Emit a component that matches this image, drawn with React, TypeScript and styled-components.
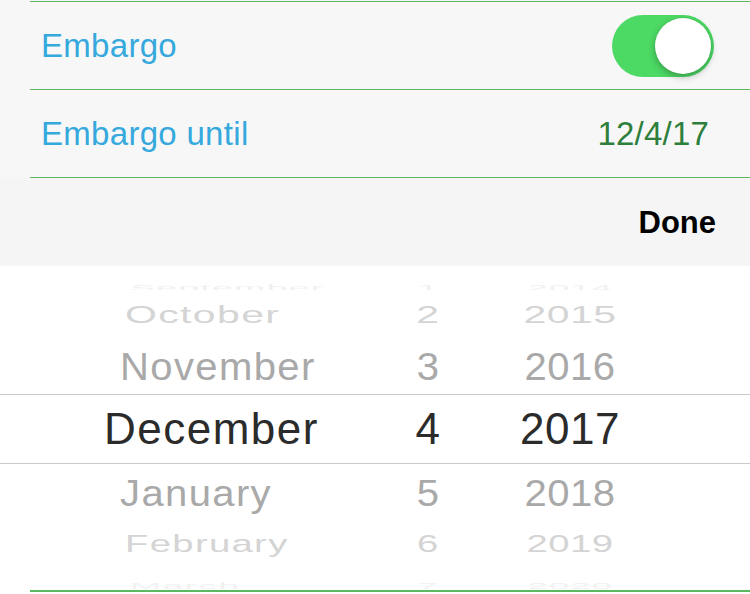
import React from "react";
import styled, { createGlobalStyle } from "styled-components";

const GlobalStyle = createGlobalStyle`
    html, body {
        margin: 0;
        padding: 0;
        background: #ffffff;
        font-family: "Liberation Sans", Arial, sans-serif;
    }
`;

type WheelRow = {
    month: string;
    day: string;
    year: string;
    height: number;
    indent: number;
    sx: number;
    sy: number;
    color: string;
    selected?: boolean;
};

const rows: WheelRow[] = [
    { month: "September", day: "1", year: "2014", height: 24, indent: 130, sx: 0.85, sy: 0.22, color: "#f1f1f1" },
    { month: "October", day: "2", year: "2015", height: 50, indent: 125, sx: 0.93, sy: 0.55, color: "#d4d4d4" },
    { month: "November", day: "3", year: "2016", height: 54, indent: 120, sx: 0.91, sy: 0.88, color: "#a9a9a9" },
    { month: "December", day: "4", year: "2017", height: 70, indent: 104, sx: 1, sy: 1, color: "#2b2b2b", selected: true },
    { month: "January", day: "5", year: "2018", height: 58, indent: 120, sx: 0.91, sy: 0.86, color: "#a9a9a9" },
    { month: "February", day: "6", year: "2019", height: 42, indent: 125, sx: 0.87, sy: 0.55, color: "#d4d4d4" },
    { month: "March", day: "7", year: "2020", height: 26, indent: 130, sx: 0.85, sy: 0.2, color: "#f1f1f1" },
];

const Page = styled.div`
    width: 750px;
    height: 594px;
    overflow: hidden;
    background: #ffffff;
`;

const Settings = styled.div`
    background: #f7f7f7;
    padding-top: 1px;
`;

const Row = styled.div`
    display: flex;
    align-items: center;
    justify-content: space-between;
    height: 87px;
    margin-left: 30px;
    padding-left: 11px;
    border-top: 1px solid #5cb85f;
    &:last-child {
        border-bottom: 1px solid #5cb85f;
    }
`;

const Label = styled.span`
    font-size: 33px;
    letter-spacing: 0.3px;
    color: #35a9dd;
`;

const Value = styled.span`
    font-size: 33px;
    letter-spacing: 0.2px;
    color: #2d7f3b;
    margin-right: 41px;
`;

const Track = styled.div<{ on: boolean }>`
    position: relative;
    width: 102px;
    height: 62px;
    border-radius: 31px;
    background: ${p => (p.on ? "#4cd964" : "#e5e5e5")};
    margin-right: 36px;
`;

const Knob = styled.div`
    position: absolute;
    top: 3px;
    right: 3px;
    width: 56px;
    height: 56px;
    border-radius: 50%;
    background: #ffffff;
    box-shadow: 0 3px 7px rgba(0, 0, 0, 0.28), 0 0 0 0.5px rgba(0, 0, 0, 0.06);
`;

const Toolbar = styled.div`
    display: flex;
    align-items: center;
    justify-content: flex-end;
    height: 88px;
    background: #f5f5f5;
    padding-right: 34px;
`;

const DoneButton = styled.span`
    font-size: 31px;
    font-weight: 700;
    color: #000000;
    padding-top: 2px;
`;

const Picker = styled.div`
    height: 324px;
    overflow: hidden;
    background: #ffffff;
`;

const PickerRow = styled.div<{ h: number; selected?: boolean }>`
    display: grid;
    grid-template-columns: 380px 96px 188px 1fr;
    align-items: center;
    box-sizing: border-box;
    height: ${p => p.h}px;
    overflow: hidden;
    border-top: ${p => (p.selected ? "1px solid #c9c9c9" : "none")};
    border-bottom: ${p => (p.selected ? "1px solid #c9c9c9" : "none")};
`;

const Cell = styled.span<{ color: string }>`
    display: block;
    font-size: 44px;
    line-height: 44px;
    white-space: nowrap;
    color: ${p => p.color};
`;

const MonthCell = styled(Cell)`
    letter-spacing: 1.5px;
    transform-origin: left center;
`;

const NumberCell = styled(Cell)`
    text-align: center;
    letter-spacing: 0.5px;
    transform-origin: center center;
`;

const BottomLine = styled.div`
    margin-left: 30px;
    border-top: 2px solid #5cb85f;
`;

export default function App() {
    const embargoOn = true;
    return (
        <Page>
            <GlobalStyle />
            <Settings>
                <Row>
                    <Label>Embargo</Label>
                    <Track on={embargoOn}>
                        <Knob />
                    </Track>
                </Row>
                <Row>
                    <Label>Embargo until</Label>
                    <Value>12/4/17</Value>
                </Row>
            </Settings>
            <Toolbar>
                <DoneButton>Done</DoneButton>
            </Toolbar>
            <Picker>
                {rows.map(r => (
                    <PickerRow key={r.month} h={r.height} selected={r.selected}>
                        <MonthCell
                            color={r.color}
                            style={{ paddingLeft: r.indent, transform: `translateX(${r.indent * (1 - r.sx)}px) scale(${r.sx}, ${r.sy})` }}
                        >
                            {r.month}
                        </MonthCell>
                        <NumberCell color={r.color} style={{ transform: `scale(${r.sx}, ${r.sy})` }}>
                            {r.day}
                        </NumberCell>
                        <NumberCell color={r.color} style={{ transform: `scale(${r.sx}, ${r.sy})` }}>
                            {r.year}
                        </NumberCell>
                        <span />
                    </PickerRow>
                ))}
            </Picker>
            <BottomLine />
        </Page>
    );
}
